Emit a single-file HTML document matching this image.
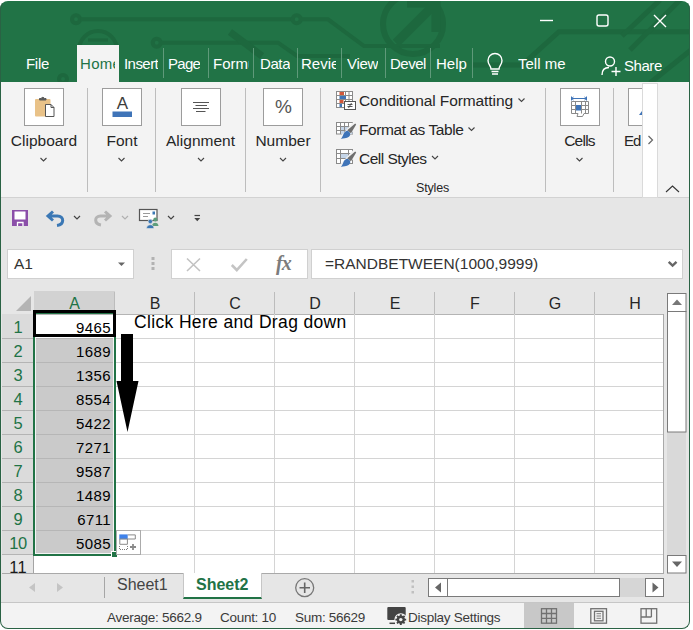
<!DOCTYPE html>
<html><head><meta charset="utf-8"><title>Excel</title>
<style>
*{box-sizing:border-box;margin:0;padding:0}
html,body{width:693px;height:630px;overflow:hidden;background:#fff;font-family:"Liberation Sans",sans-serif;}
#win{position:absolute;left:0;top:0;width:693px;height:630px;overflow:hidden;background:#e6e6e6}
#frame{position:absolute;left:0;top:1px;width:690px;height:628px;border-radius:8px;border:1px solid #2a6244;border-top-color:transparent;box-shadow:0 0 0 12px #fff;z-index:50}
.abs{position:absolute}
#title{position:absolute;left:0;top:0;width:691px;height:83px;background:#217346}
.tab{position:absolute;top:54px;height:20px;line-height:20px;font-size:15px;color:#fff;white-space:nowrap;overflow:hidden}
.tsep{position:absolute;top:48px;width:1px;height:30px;background:#5f9a7a}
#ribbon{position:absolute;left:0;top:82px;width:690px;height:116px;background:#f3f3f3;border-bottom:1px solid #d2d2d2}
.gsep{position:absolute;top:6px;width:1px;height:104px;background:#bdbdbd}
.ibox{position:absolute;top:6px;width:40px;height:38px;background:#fff;border:1px solid #9c9c9c}
.glabel{position:absolute;top:49px;height:20px;line-height:20px;font-size:15.5px;color:#262626;text-align:center;white-space:nowrap}
.chev{position:absolute}
.stext{position:absolute;left:359px;font-size:15.5px;height:20px;line-height:20px;color:#262626;white-space:nowrap}
#grid{position:absolute;left:2px;top:291px;width:662px;height:283px;background:#fff;overflow:hidden}
.ch{position:absolute;top:1px;height:22px;line-height:23px;font-size:16px;text-align:center;padding-left:1px}
.rh{position:absolute;left:0;width:32px;height:24px;line-height:27px;font-size:16.5px;text-align:center}
.hl{position:absolute;left:32px;width:630px;height:1px;background:#d4d4d4}
.vl{position:absolute;top:23px;width:1px;height:260px;background:#d4d4d4}
.num{position:absolute;left:32px;width:80px;height:23px;line-height:25px;font-size:15px;letter-spacing:0.4px;color:#000;text-align:right;padding-right:3px}
.st{position:absolute;top:6px;font-size:13.5px;letter-spacing:-0.28px;line-height:18px;color:#3a3a3a;white-space:nowrap}
</style></head><body>
<div id="win">
 <div id="frame"></div>
 <div id="title">
  <svg class="abs" style="left:0;top:0" width="691" height="83" viewBox="0 0 691 83" fill="none" stroke="#1b6139" stroke-width="4" opacity="0.6">
   <circle cx="76" cy="19.300" r="4"/><path d="M80.500 19.300H292.500"/><circle cx="296.700" cy="19.300" r="4"/>
   <path d="M301 19.300H328L364 46H440"/>
   <circle cx="98" cy="50" r="19"/><path d="M88 40H108M88 47H108" stroke-width="3"/>
   <circle cx="156.700" cy="42.700" r="4"/><path d="M161 42.700H278L297 56H350"/>
   <circle cx="63" cy="79" r="4"/>
   <path d="M230 32L262 56" stroke-width="7"/>
   <circle cx="413" cy="24" r="30" stroke-width="6"/><path d="M396 43L433 6M407 3H436V32" stroke-width="9"/>
   <path d="M691 31.700H559L522 65H472" stroke-width="5"/>
   <path d="M680 0L630 50M660 0L622 36M691 50L650 83" stroke-width="5"/>
  </svg>
  <div class="abs" style="left:77px;top:45px;width:42px;height:38px;background:#f3f3f3"></div>
  <div class="tab" style="left:26px;letter-spacing:-0.3px">File</div>
  <div class="tab" style="left:80px;width:34.5px;color:#217346;letter-spacing:0.3px">Home</div>
  <div class="tab" style="left:124px;letter-spacing:-0.55px">Insert</div>
  <div class="tab" style="left:168px;letter-spacing:-0.7px">Page</div>
  <div class="tab" style="left:213px;width:36px">Formulas</div>
  <div class="tab" style="left:260px;letter-spacing:-0.4px">Data</div>
  <div class="tab" style="left:301px;width:35px">Review</div>
  <div class="tab" style="left:347px;letter-spacing:-0.3px">View</div>
  <div class="tab" style="left:390px;width:35.5px;letter-spacing:-0.5px">Developer</div>
  <div class="tab" style="left:436px">Help</div>
  <div class="tab" style="left:518px">Tell me</div>
  <div class="tab" style="left:624px;top:56px;letter-spacing:-0.45px">Share</div>
  <div class="tsep" style="left:163px"></div><div class="tsep" style="left:208px"></div><div class="tsep" style="left:253px"></div>
  <div class="tsep" style="left:297px"></div><div class="tsep" style="left:341px"></div><div class="tsep" style="left:385px"></div>
  <div class="tsep" style="left:430px"></div><div class="tsep" style="left:472px"></div>
  <svg class="abs" style="left:530px;top:6px" width="150" height="30" viewBox="0 0 150 30" fill="none" stroke="#fff" stroke-width="1.4">
   <path d="M10 14.5H23"/><rect x="67" y="9" width="11" height="11" rx="2"/><path d="M124 9L136 21M136 9L124 21"/>
  </svg>
  <svg class="abs" style="left:484px;top:51.500px" width="22" height="26" viewBox="0 0 22 26" fill="none" stroke="#fff" stroke-width="1.4">
   <path d="M7 17C7 14 4 12.5 4 8.5A7 7 0 0 1 18 8.500C18 12.500 15 14 15 17ZM7.500 19.500H14.500M8 22H14"/>
  </svg>
  <svg class="abs" style="left:599px;top:53.500px" width="24" height="24" viewBox="0 0 24 24" fill="none" stroke="#fff" stroke-width="1.4">
   <circle cx="11" cy="7.500" r="4.500"/><path d="M3 21C3 16 6 13.500 10 13.500M17 13V22M12.500 17.500H21.500"/>
  </svg>
 </div>

 <div id="ribbon">
  <div class="ibox" style="left:24px"></div>
  <div class="ibox" style="left:102px"></div>
  <div class="ibox" style="left:181px"></div>
  <div class="ibox" style="left:263px"></div>
  <div class="ibox" style="left:560px"></div>
  <div class="ibox" style="left:628px;width:20px;border-right:none"></div>
  <div class="gsep" style="left:87px"></div><div class="gsep" style="left:155px"></div><div class="gsep" style="left:245px"></div>
  <div class="gsep" style="left:320px"></div><div class="gsep" style="left:545px"></div><div class="gsep" style="left:613px"></div>
  <div class="abs" style="left:102.5px;top:12px;width:40px;text-align:center;font-size:17px;line-height:20px;color:#3c3c3c">A</div>
  <div class="abs" style="left:263.500px;top:14px;width:40px;text-align:center;font-size:19px;line-height:22px;color:#555">%</div>
  <div class="glabel" style="left:4px;width:80px">Clipboard</div>
  <div class="glabel" style="left:82px;width:80px">Font</div>
  <div class="glabel" style="left:160.500px;width:80px">Alignment</div>
  <div class="glabel" style="left:243px;width:80px">Number</div>
  <div class="glabel" style="left:539.500px;width:80px;letter-spacing:-0.75px">Cells</div>
  <div class="glabel" style="left:624px;width:20px;text-align:left;letter-spacing:-1px;font-size:15px">Ed</div>
  <div class="stext" style="top:9px;letter-spacing:-0.09px">Conditional Formatting</div>
  <div class="stext" style="top:38px;letter-spacing:-0.43px">Format as Table</div>
  <div class="stext" style="top:67px;letter-spacing:-0.52px">Cell Styles</div>
  <div class="stext" style="left:416px;top:98px;font-size:12.5px;letter-spacing:-0.15px;height:16px;line-height:16px">Styles</div>
  <div class="abs" style="left:642px;top:1px;width:16px;height:115px;background:#fff;border:1px solid #dadada"></div>

  <svg class="abs" style="left:0;top:0" width="690" height="116" viewBox="0 82 690 116" fill="none">
   <!-- clipboard -->
   <rect x="35" y="99" width="15.500" height="17.500" rx="1" fill="#e9c288"/>
   <path d="M39.500 100V98.500H41.200A1.700 1.700 0 0 1 44.400 98.500H46V100Z" fill="#5a5a5a" stroke="#5a5a5a" stroke-width="1"/>
   <path d="M45.500 104.500H51L54 107.500V116.500H45.500Z" fill="#fff" stroke="#555" stroke-width="1"/>
   <path d="M51 104.500V107.500H54" stroke="#555" stroke-width="1"/>
   <!-- font bar -->
   <rect x="112.500" y="111.500" width="19.500" height="5.500" fill="#3f74b8"/>
   <!-- alignment -->
   <path d="M193 102.500H209M195.500 105.500H207M193 108.500H209M196 111.500H205.500" stroke="#555" stroke-width="1"/>
   <!-- styles icons -->
   <g stroke="#8a8a8a" stroke-width="1">
    <rect x="336.500" y="91.500" width="16" height="16" fill="#fff"/>
    <path d="M336.500 95.500H352.500M336.500 99.500H352.500M336.500 103.500H352.500M345.500 91.500V107.500M349 91.500V103"/>
   </g>
   <rect x="339.500" y="92" width="4.500" height="3" fill="#d1583a"/><rect x="339.500" y="96" width="6.500" height="3" fill="#3f74b8"/>
   <rect x="339.500" y="100" width="4" height="3" fill="#d1583a"/><rect x="339.500" y="104" width="2.500" height="3" fill="#3f74b8"/>
   <rect x="344.500" y="101.500" width="11" height="8" fill="#fff" stroke="#555" stroke-width="1"/>
   <path d="M347.500 104.500H352.500M347.500 106.500H352.500M351.500 103L348.500 108" stroke="#444" stroke-width="0.900"/>
   <g stroke="#8a8a8a" stroke-width="1">
    <rect x="336.500" y="122.500" width="16" height="11.500" fill="#fff"/>
    <rect x="340.500" y="126.500" width="12" height="7.500" fill="#c5d5e8" stroke="none"/>
    <path d="M336.500 126.500H352.500M336.500 130.500H352.500M340.500 122.500V134M344.500 122.500V134M348.500 122.500V134"/>
   </g>
   <path d="M355 124.5L346 134.5L342 138.5" stroke="#f3f3f3" stroke-width="6" stroke-linecap="round"/>
   <path d="M355.200 123.6L356.200 124.6L351 133.2L347.200 130.2Z" fill="#6e6e6e"/>
   <path d="M346.800 130.8C350 131.3 351.600 134.5 349 136.8C346.500 138.9 343.500 138 340.800 139C343.500 136.5 342.800 132.3 346.800 130.8Z" fill="#3f74b8"/>
   <g stroke="#8a8a8a" stroke-width="1">
    <rect x="336.500" y="149.500" width="16" height="14" fill="#fff"/>
    <rect x="340.500" y="153.500" width="8" height="5" fill="#c5d5e8" stroke="none"/>
    <path d="M336.500 153.500H352.500M336.500 158.500H352.500M340.500 149.500V163.500M348.500 149.500V163.500"/>
   </g>
   <path d="M355 152.5L346 162.5L342 166.5" stroke="#f3f3f3" stroke-width="6" stroke-linecap="round"/>
   <path d="M355.200 151.6L356.200 152.6L351 161.2L347.200 158.2Z" fill="#6e6e6e"/>
   <path d="M346.800 158.8C350 159.3 351.600 162.5 349 164.8C346.500 166.9 343.500 166 340.800 167C343.500 164.5 342.800 160.3 346.800 158.8Z" fill="#3f74b8"/>
   <!-- cells icon -->
   <path d="M571 98.500H586.500M571.500 96.500V100.500M586.500 96.500V100.500M573.500 97L571.500 98.500L573.500 100M584.500 97L586.500 98.500L584.500 100" stroke="#3f74b8" stroke-width="1"/>
   <g stroke="#8a8a8a" stroke-width="1">
    <path d="M571.500 101.500H588.500V113.500H584L582.500 116.500H577L578 113.500H571.500Z" fill="#fff"/>
    <path d="M571.500 105.500H588.500M571.500 109.500H588.500M575.500 101.500V113.500M581.500 101.500V113.500M585.500 101.500V113.500"/>
   </g>
   <rect x="576" y="105" width="5" height="5.500" fill="#3f74b8"/>
   <!-- Ed icon bit -->
   <path d="M639 115L642 111V115Z" fill="#3f74b8"/>
   <!-- chevrons -->
   <g stroke="#444" stroke-width="1.100">
    <path d="M40.500 158L43.500 161L46.500 158"/><path d="M118.500 158L121.500 161L124.500 158"/>
    <path d="M198 158L201 161L204 158"/><path d="M280 158L283 161L286 158"/>
    <path d="M576.500 158L579.500 161L582.500 158"/>
    <path d="M518.500 98.500L521.500 101.500L524.500 98.500"/><path d="M468.500 127.500L471.500 130.500L474.500 127.500"/><path d="M432 156L435 159L438 156"/>
   </g>
  </svg>
  <svg class="abs" style="left:640px;top:0" width="50" height="116" viewBox="640 82 50 116" fill="none" stroke="#666" stroke-width="1.200">
   <path d="M648.500 136L652.500 140L648.500 144"/><path d="M666 192L672.500 186L679 192" stroke="#333" stroke-width="1.100"/>
  </svg>
 </div>

  <div class="abs" style="left:7px;top:249px;width:127px;height:30px;background:#fff;border:1px solid #d0d0d0"></div>
 <div class="abs" style="left:14px;top:253px;font-size:15.5px;line-height:22px;color:#333">A1</div>
 <div class="abs" style="left:171px;top:249px;width:137px;height:30px;background:#fff;border:1px solid #d0d0d0"></div>
 <div class="abs" style="left:311px;top:249px;width:372px;height:30px;background:#fff;border:1px solid #d0d0d0"></div>
 <div class="abs" style="left:325px;top:253px;font-size:15.5px;line-height:22px;color:#333">=RANDBETWEEN(1000,9999)</div>

 <svg id="qat" class="abs" style="left:0;top:198px" width="690" height="92" viewBox="0 198 690 92" fill="none">
  <path d="M12 210H28V226H12Z" fill="#8b4fa9"/><rect x="14.500" y="211.500" width="11" height="8" fill="#fff"/>
  <path d="M17.500 226V222.500H23V226" stroke="#fff" stroke-width="1.300"/>
  <path d="M53 211.500L48 216L53 220.500M48.500 216H57.500C64.500 216 64.500 224.500 57 225.500" stroke="#3b78b5" stroke-width="3"/>
  <path d="M105 211.500L110 216L105 220.500M109.500 216H100.500C94 216 94 224 101 225" stroke="#b4b4b4" stroke-width="3"/>
  <path d="M74 216L77 219L80 216" stroke="#444" stroke-width="1.200"/>
  <path d="M122 216L125 219L128 216" stroke="#b0b0b0" stroke-width="1.200"/>
  <path d="M168 216L171 219L174 216" stroke="#444" stroke-width="1.200"/>
  <rect x="139.500" y="209.500" width="17.500" height="11" fill="#fff" stroke="#555" stroke-width="1.200"/>
  <path d="M143 213.500H150M143 216.500H148" stroke="#999" stroke-width="1"/><rect x="152.500" y="211.500" width="2.500" height="3" fill="#3b78b5"/>
  <circle cx="155.300" cy="219.500" r="2" fill="#5e9d7c"/><path d="M152 226C152 221.500 158.500 221.500 158.500 226Z" fill="#5e9d7c"/>
  <circle cx="150.300" cy="221.500" r="2.200" fill="#3b78b5" stroke="#e6e6e6" stroke-width="0.600"/><path d="M146.500 228.500C146.500 223.500 154 223.500 154 228.500Z" fill="#3b78b5" stroke="#e6e6e6" stroke-width="0.600"/>
  <path d="M194.500 215.500H200" stroke="#444" stroke-width="1.200"/><path d="M194.300 218H200.200L197.250 221.200Z" fill="#444"/>
  <path d="M118 262.500H125L121.500 266Z" fill="#666"/>
  <path d="M151.500 257H154.500V260H151.500ZM151.500 262H154.500V265H151.500ZM151.500 267H154.500V270H151.500Z" fill="#b2b2b2"/>
  <path d="M187 258.500L200 271M200 258.500L187 271" stroke="#c2c2c2" stroke-width="1.600"/>
  <path d="M231.800 265L236.800 270L246.800 259" stroke="#c4c4c4" stroke-width="2.600"/>
  <path d="M668.700 261.800L672.600 265.600L676.500 261.800" stroke="#666" stroke-width="2.400"/>
 </svg>
 <div class="abs" style="left:276px;top:251px;width:20px;font-family:'Liberation Serif',serif;font-style:italic;font-weight:bold;font-size:20px;line-height:24px;color:#7c7c7c;letter-spacing:-1px">fx</div>
 <div id="grid">
  <div class="abs" style="left:0;top:0;width:662px;height:23px;background:#e6e6e6"></div>
  <svg class="abs" style="left:12.5px;top:4px" width="17" height="17" viewBox="0 0 17 17"><path d="M16 1V16H1Z" fill="#b4b4b4"/></svg>
  <div class="abs" style="left:32px;top:0;width:81px;height:23px;background:#d2d2d2;border-bottom:2px solid #217346"></div>
  <div class="ch" style="left:32px;width:80px;color:#217346">A</div>
  <div class="ch" style="left:113px;width:79px;color:#262626">B</div>
  <div class="ch" style="left:193px;width:79px;color:#262626">C</div>
  <div class="ch" style="left:273px;width:79px;color:#262626">D</div>
  <div class="ch" style="left:353px;width:79px;color:#262626">E</div>
  <div class="ch" style="left:433px;width:79px;color:#262626">F</div>
  <div class="ch" style="left:513px;width:79px;color:#262626">G</div>
  <div class="ch" style="left:593px;width:79px;color:#262626">H</div>
  <div class="abs" style="left:112px;top:1px;width:1px;height:22px;background:#bcbcbc"></div>
  <div class="abs" style="left:192px;top:1px;width:1px;height:22px;background:#bcbcbc"></div>
  <div class="abs" style="left:272px;top:1px;width:1px;height:22px;background:#bcbcbc"></div>
  <div class="abs" style="left:352px;top:1px;width:1px;height:22px;background:#bcbcbc"></div>
  <div class="abs" style="left:432px;top:1px;width:1px;height:22px;background:#bcbcbc"></div>
  <div class="abs" style="left:512px;top:1px;width:1px;height:22px;background:#bcbcbc"></div>
  <div class="abs" style="left:592px;top:1px;width:1px;height:22px;background:#bcbcbc"></div>
  <div class="abs" style="left:32px;top:23px;width:630px;height:1px;background:#b4b4b4"></div>
  <div class="vl" style="left:192px"></div>
  <div class="vl" style="left:272px"></div>
  <div class="vl" style="left:352px"></div>
  <div class="vl" style="left:432px"></div>
  <div class="vl" style="left:512px"></div>
  <div class="vl" style="left:592px"></div>
  <div class="rh" style="top:23px;background:#dbdbdb;color:#217346">1</div>
  <div class="hl" style="top:47px"></div>
  <div class="num" style="top:24px;background:#fff">9465</div>
  <div class="abs" style="left:34px;top:47px;width:78px;height:1px;background:#b6b6b6"></div>
  <div class="rh" style="top:47px;background:#dbdbdb;color:#217346">2</div>
  <div class="hl" style="top:71px"></div>
  <div class="num" style="top:48px;background:#cacaca">1689</div>
  <div class="abs" style="left:34px;top:71px;width:78px;height:1px;background:#b6b6b6"></div>
  <div class="rh" style="top:71px;background:#dbdbdb;color:#217346">3</div>
  <div class="hl" style="top:95px"></div>
  <div class="num" style="top:72px;background:#cacaca">1356</div>
  <div class="abs" style="left:34px;top:95px;width:78px;height:1px;background:#b6b6b6"></div>
  <div class="rh" style="top:95px;background:#dbdbdb;color:#217346">4</div>
  <div class="hl" style="top:119px"></div>
  <div class="num" style="top:96px;background:#cacaca">8554</div>
  <div class="abs" style="left:34px;top:119px;width:78px;height:1px;background:#b6b6b6"></div>
  <div class="rh" style="top:119px;background:#dbdbdb;color:#217346">5</div>
  <div class="hl" style="top:143px"></div>
  <div class="num" style="top:120px;background:#cacaca">5422</div>
  <div class="abs" style="left:34px;top:143px;width:78px;height:1px;background:#b6b6b6"></div>
  <div class="rh" style="top:143px;background:#dbdbdb;color:#217346">6</div>
  <div class="hl" style="top:167px"></div>
  <div class="num" style="top:144px;background:#cacaca">7271</div>
  <div class="abs" style="left:34px;top:167px;width:78px;height:1px;background:#b6b6b6"></div>
  <div class="rh" style="top:167px;background:#dbdbdb;color:#217346">7</div>
  <div class="hl" style="top:191px"></div>
  <div class="num" style="top:168px;background:#cacaca">9587</div>
  <div class="abs" style="left:34px;top:191px;width:78px;height:1px;background:#b6b6b6"></div>
  <div class="rh" style="top:191px;background:#dbdbdb;color:#217346">8</div>
  <div class="hl" style="top:215px"></div>
  <div class="num" style="top:192px;background:#cacaca">1489</div>
  <div class="abs" style="left:34px;top:215px;width:78px;height:1px;background:#b6b6b6"></div>
  <div class="rh" style="top:215px;background:#dbdbdb;color:#217346">9</div>
  <div class="hl" style="top:239px"></div>
  <div class="num" style="top:216px;background:#cacaca">6711</div>
  <div class="abs" style="left:34px;top:239px;width:78px;height:1px;background:#b6b6b6"></div>
  <div class="rh" style="top:239px;background:#dbdbdb;color:#217346;letter-spacing:-0.5px">10</div>
  <div class="hl" style="top:263px"></div>
  <div class="num" style="top:240px;background:#cacaca">5085</div>
  <div class="rh" style="top:263px;background:#e6e6e6;color:#1a1a1a;letter-spacing:0.3px">11</div>
  <div class="hl" style="top:287px"></div>
  <div class="abs" style="left:0;top:47px;width:32px;height:1px;background:#b4b4b4"></div>
  <div class="abs" style="left:0;top:71px;width:32px;height:1px;background:#b4b4b4"></div>
  <div class="abs" style="left:0;top:95px;width:32px;height:1px;background:#b4b4b4"></div>
  <div class="abs" style="left:0;top:119px;width:32px;height:1px;background:#b4b4b4"></div>
  <div class="abs" style="left:0;top:143px;width:32px;height:1px;background:#b4b4b4"></div>
  <div class="abs" style="left:0;top:167px;width:32px;height:1px;background:#b4b4b4"></div>
  <div class="abs" style="left:0;top:191px;width:32px;height:1px;background:#b4b4b4"></div>
  <div class="abs" style="left:0;top:215px;width:32px;height:1px;background:#b4b4b4"></div>
  <div class="abs" style="left:0;top:239px;width:32px;height:1px;background:#b4b4b4"></div>
  <div class="abs" style="left:0;top:263px;width:32px;height:1px;background:#b4b4b4"></div>
  <div class="abs" style="left:0;top:287px;width:32px;height:1px;background:#b4b4b4"></div>
  <div class="abs" style="left:31px;top:265px;width:1px;height:18px;background:#a4a4a4"></div>
  <div class="abs" style="left:661px;top:23px;width:1px;height:260px;background:#a9a9a9"></div>
  <div class="abs" style="left:0;top:282px;width:662px;height:1px;background:#a9a9a9"></div>
  <div class="abs" style="left:31px;top:21px;width:83px;height:244px;border:2px solid #217346"></div>
  <div class="abs" style="left:33px;top:23px;width:79px;height:240px;border:1px solid #f4f4f4;border-top:none"></div>
  <div class="abs" style="left:109px;top:260px;width:5px;height:5px;background:#217346;border-left:1px solid #fff;border-top:1px solid #fff;box-sizing:content-box"></div>
  <div class="abs" style="left:31px;top:19px;width:83px;height:27px;border:3px solid #000"></div>
  <div class="abs" style="left:132px;top:19px;font-size:17.5px;line-height:24px;letter-spacing:0.35px;color:#000;white-space:nowrap">Click Here and Drag down</div>
  <svg class="abs" style="left:108px;top:39px" width="40" height="110" viewBox="110 330 40 110"><path d="M121 334H133V381H138.500L127.500 432L116.500 381H121Z" fill="#000"/></svg>
  <svg class="abs" style="left:114px;top:239px" width="26" height="26" viewBox="116 530 26 26" fill="none">
   <rect x="116.500" y="530.500" width="24" height="24" fill="#fff" stroke="#ababab"/>
   <rect x="119.300" y="534.400" width="8.400" height="4.800" fill="#3f82ea"/>
   <path d="M127.700 534.900H135.300V539H119.800V544.300H127.400V539" stroke="#8a8a8a"/>
   <path d="M119.500 546V549.500H127.500V546" stroke="#7a7a7a" stroke-dasharray="1 1"/>
   <path d="M130 547H136M133 544V550" stroke="#8a8a8a" stroke-width="1.800"/>
  </svg>
 </div>

 <div id="tabs" class="abs" style="left:0;top:574px;width:690px;height:29px;background:#e6e6e6;border-bottom:1px solid #c6c6c6">
  <svg class="abs" style="left:0;top:-1px" width="690" height="29" viewBox="0 573 690 29" fill="none">
   <path d="M35 583L29 587.500L35 592Z" fill="#c4c4c4"/><path d="M57 583L63 587.500L57 592Z" fill="#c4c4c4"/>
   <path d="M104.500 577V598" stroke="#a6a6a6" stroke-width="1"/>
   <circle cx="304.700" cy="587.700" r="9" stroke="#777" stroke-width="1.300"/><path d="M299.500 587.700H310M304.700 582.500V593" stroke="#666" stroke-width="1.600"/>
   <path d="M411.500 580H414V582.500H411.500ZM411.500 585.500H414V588H411.500ZM411.500 591H414V593.500H411.500Z" fill="#c0c0c0"/>
   <rect x="447" y="578" width="199" height="19" fill="#d6d6d6"/>
   <rect x="428.500" y="578.500" width="19" height="18" fill="#fff" stroke="#7a7a7a"/><path d="M441 582.500V592.500L435 587.500Z" fill="#666"/>
   <rect x="447.500" y="578.500" width="172" height="18" fill="#fff" stroke="#7a7a7a"/>
   <rect x="645.500" y="578.500" width="18" height="18" fill="#fff" stroke="#7a7a7a"/><path d="M652.500 582.500V592.500L658.500 587.500Z" fill="#666"/>
  </svg>
  <div class="abs" style="left:183px;top:-1px;width:79px;height:26px;background:#fff;border-bottom:2px solid #217346;border-left:1px solid #c6c6c6;border-right:1px solid #c6c6c6"></div>
  <div class="abs" style="left:117px;top:1px;font-size:16px;line-height:20px;color:#444">Sheet1</div>
  <div class="abs" style="left:196px;top:1px;font-size:16px;line-height:20px;color:#217346;font-weight:bold">Sheet2</div>
 </div>
 <div id="status" class="abs" style="left:0;top:603px;width:690px;height:27px;background:#f3f3f3">
  <div class="abs" style="left:524px;top:0;width:50px;height:27px;background:#c8c8c8"></div>
  <div class="st" style="left:107px">Average: 5662.9</div>
  <div class="st" style="left:220px">Count: 10</div>
  <div class="st" style="left:295px">Sum: 56629</div>
  <div class="st" style="left:408px">Display Settings</div>
  <svg class="abs" style="left:0;top:0" width="690" height="27" viewBox="0 603 690 27" fill="none">
   <rect x="387.300" y="607" width="18.400" height="13" rx="1" fill="#444"/><path d="M389.500 623.300H395" stroke="#444" stroke-width="1.500"/>
   <circle cx="400.800" cy="619.600" r="6.400" fill="#f3f3f3"/>
   <circle cx="400.800" cy="619.600" r="3" stroke="#444" stroke-width="2.400"/>
   <path d="M400.800 614.200V625M395.400 619.600H406.200M397 615.800L404.600 623.400M404.600 615.800L397 623.400" stroke="#444" stroke-width="1.900"/>
   <circle cx="400.800" cy="619.600" r="1.700" fill="#f3f3f3"/>
   <g stroke="#717171" stroke-width="1.300">
    <rect x="541.500" y="608.700" width="15" height="14.500"/><path d="M541.500 613.500H556.500M541.500 618.400H556.500M546.500 608.700V623.200M551.500 608.700V623.200"/>
    <rect x="590.800" y="608.700" width="15.700" height="14.500"/><rect x="594.500" y="611.300" width="8.500" height="9.500"/><path d="M596.500 613.700H601M596.500 616H601M596.500 618.300H601" stroke-width="0.900"/>
    <rect x="641" y="608.700" width="15.700" height="14.500"/><path d="M641 617H651.400M646.200 608.700V617M651.400 608.700V617"/>
   </g>
  </svg>
 </div>
 <svg class="abs" style="left:660px;top:290px" width="30" height="284" viewBox="660 290 30 284" fill="none">
  <rect x="667" y="293" width="19" height="280" fill="#d9d9d9"/>
  <rect x="667.500" y="293.500" width="18.500" height="18" fill="#fff" stroke="#7a7a7a"/><path d="M672 305H682L677 299.500Z" fill="#777"/>
  <rect x="667.500" y="311.500" width="18.500" height="120.500" fill="#fff" stroke="#7a7a7a"/>
  <rect x="667.500" y="555.500" width="18.500" height="17.500" fill="#fff" stroke="#7a7a7a"/><path d="M672 561.500H682L677 567Z" fill="#666"/>
 </svg>
</div>
</body></html>
